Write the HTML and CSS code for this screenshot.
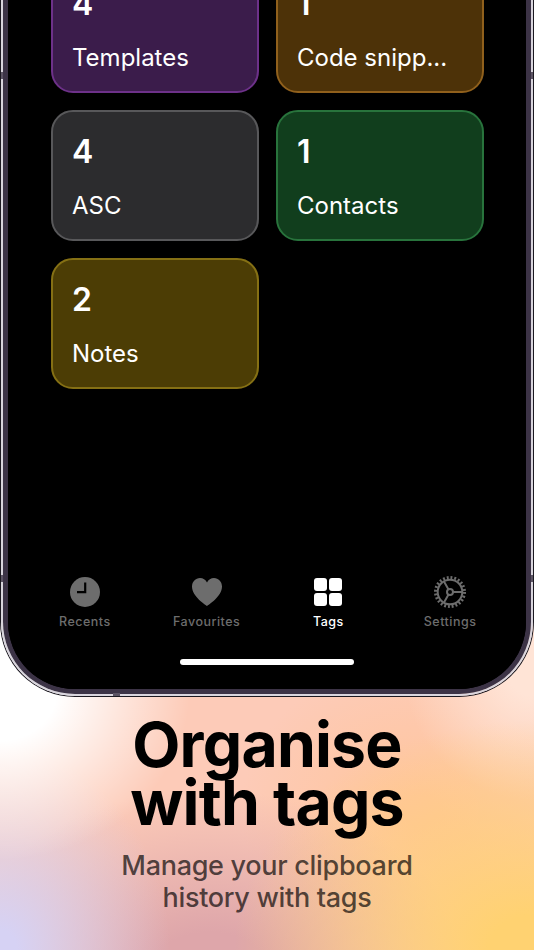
FILE: index.html
```html
<!DOCTYPE html>
<html lang="en">
<head>
<meta charset="utf-8">
<title>Organise with tags</title>
<link rel="stylesheet" href="styles.css">
</head>
<body>
<main class="page">
  <div class="phone">
    <div class="phone-band">
      <div class="phone-frame">
        <div class="screen">
          <div class="tag-grid">
            <div class="tag tag-purple"><span class="tag-count">4</span><span class="tag-name">Templates</span></div>
            <div class="tag tag-brown"><span class="tag-count">1</span><span class="tag-name">Code snipp...</span></div>
            <div class="tag tag-grey"><span class="tag-count">4</span><span class="tag-name">ASC</span></div>
            <div class="tag tag-green"><span class="tag-count">1</span><span class="tag-name">Contacts</span></div>
            <div class="tag tag-yellow"><span class="tag-count">2</span><span class="tag-name">Notes</span></div>
          </div>
          <nav class="tabs">
            <div class="tab">
              <svg class="tab-icon" viewBox="0 0 32 32" aria-hidden="true"><circle cx="16" cy="16" r="15" fill="currentColor"/><path d="M16.2 6.500V16.200H8" fill="none" stroke="#000" stroke-width="2.200"/></svg>
              <span>Recents</span>
            </div>
            <div class="tab">
              <svg class="tab-icon" viewBox="0 0 32 32" aria-hidden="true"><path d="M16 30C14.800 29 1 20.500 1 10.500C1 5.600 4.600 2 9 2C12 2 14.600 3.600 16 6.400C17.400 3.600 20 2 23 2C27.400 2 31 5.600 31 10.500C31 20.500 17.200 29 16 30Z" fill="currentColor"/></svg>
              <span>Favourites</span>
            </div>
            <div class="tab tab-active">
              <svg class="tab-icon" viewBox="0 0 32 32" aria-hidden="true"><rect x="2" y="2" width="13" height="13" rx="3" fill="currentColor"/><rect x="17" y="2" width="13" height="13" rx="3" fill="currentColor"/><rect x="2" y="17" width="13" height="13" rx="3" fill="currentColor"/><rect x="17" y="17" width="13" height="13" rx="3" fill="currentColor"/></svg>
              <span>Tags</span>
            </div>
            <div class="tab">
              <svg class="tab-icon" viewBox="0 0 32 32" aria-hidden="true" fill="none" stroke="currentColor"><circle cx="16" cy="16" r="14.500" stroke-width="3" stroke-dasharray="1.900 1.900"/><circle cx="16" cy="16" r="12.300" stroke-width="2"/><path d="M19 16H28M14.500 13.400L10 5.600M14.500 18.600L10 26.400" stroke-width="2"/><circle cx="16" cy="16" r="3" stroke-width="2"/></svg>
              <span>Settings</span>
            </div>
          </nav>
          <div class="home-bar"></div>
        </div>
      </div>
    </div>
    <i class="antenna antenna-left-top"></i>
    <i class="antenna antenna-left-low"></i>
    <i class="antenna antenna-right-top"></i>
    <i class="antenna antenna-right-low"></i>
    <i class="antenna antenna-bottom"></i>
  </div>
  <h1 class="title">Organise<br>with tags</h1>
  <p class="subtitle">Manage your clipboard<br>history with tags</p>
</main>
</body>
</html>
```
FILE: styles.css
```css
* { box-sizing: border-box; }
html, body { margin: 0; padding: 0; }
body { width: 534px; height: 950px; overflow: hidden; font-family: Inter, "Liberation Sans", sans-serif; }

.page {
  width: 534px;
  height: 950px;
  overflow: hidden;
  text-align: center;
  background:
    radial-gradient(ellipse 190px 170px at 0 690px, #fff 30%, rgba(255,255,255,0) 100%),
    radial-gradient(ellipse 170px 200px at 0 950px, #d6d2f4 10%, rgba(214,210,244,0) 100%),
    radial-gradient(ellipse 300px 230px at 534px 950px, #ffd271 15%, rgba(255,210,113,0) 100%),
    radial-gradient(circle 130px at 534px 670px, #ffe4d6 20%, rgba(255,228,214,0) 100%),
    radial-gradient(ellipse 260px 190px at 210px 980px, #dea6aa 25%, rgba(222,166,170,0) 100%),
    radial-gradient(ellipse 180px 150px at 420px 810px, #ffc59d 10%, rgba(255,197,157,0) 100%),
    #fdcbb8;
}

.phone {
  position: relative;
  height: 697px;
  border: 1px solid #1b1820;
  border-top: 0;
  border-radius: 0 0 75px 75px;
}
.phone-band {
  height: 100%;
  border: 2px solid #d9d5dd;
  border-top: 0;
  border-radius: 0 0 74px 74px;
}
.phone-frame {
  height: 100%;
  border: 5px solid #3c3346;
  border-top: 0;
  border-radius: 0 0 72px 72px;
  background: #000;
}
.screen {
  height: 100%;
  overflow: hidden;
  display: flex;
  flex-direction: column;
  border-radius: 0 0 67px 67px;
  background: #000;
}

.tag-grid {
  display: grid;
  grid-template-columns: 208px 208px;
  grid-auto-rows: 131px;
  gap: 17px;
  margin: -38px 0 0 43px;
  flex: 1;
  align-content: start;
}
.tag {
  display: flex;
  flex-direction: column;
  justify-content: space-between;
  padding: 22px 19px 17px;
  border: 2px solid;
  border-radius: 22px;
  color: #fff;
  text-align: left;
}
.tag-count { font-size: 32px; font-weight: 600; line-height: 36px; }
.tag-name { font-size: 24px; font-weight: 400; line-height: 32px; letter-spacing: 0; }
.tag-purple { background: #3b1c4b; border-color: #6d3189; }
.tag-brown { background: #4d3208; border-color: #90601c; }
.tag-grey { background: #2c2c2e; border-color: #58585a; }
.tag-green { background: #113e1d; border-color: #28733c; }
.tag-yellow { background: #4c3d05; border-color: #857014; }

.tabs {
  display: grid;
  grid-template-columns: repeat(4, 1fr);
  padding: 0 15px 0 16px;
  margin-bottom: 29px;
}
.tab {
  display: flex;
  flex-direction: column;
  align-items: center;
  gap: 6px;
  color: #6d6d6d;
  font-size: 12.500px;
  font-weight: 500;
  line-height: 16px;
  letter-spacing: 0.5px;
}
.tab-active { color: #fff; }
.tab-icon { width: 32px; height: 32px; display: block; }

.home-bar {
  width: 174px;
  height: 6px;
  margin: 0 auto 24px;
  border-radius: 3px;
  background: #fff;
}

.antenna { position: absolute; background: #5c5464; }
.antenna-left-top, .antenna-left-low { left: 0; width: 2px; height: 7px; }
.antenna-right-top, .antenna-right-low { right: 0; width: 2px; height: 7px; }
.antenna-left-top, .antenna-right-top { top: 72px; }
.antenna-left-low, .antenna-right-low { top: 575px; }
.antenna-bottom { left: 112px; bottom: 0; width: 7px; height: 3px; }

.title {
  margin: 18px 0 0;
  font-size: 62.500px;
  font-weight: 700;
  line-height: 58px;
  letter-spacing: -0.8px;
  color: #000;
}
.subtitle {
  margin: 19px 0 0;
  font-size: 27px;
  font-weight: 500;
  line-height: 32px;
  letter-spacing: -0.3px;
  color: rgba(0,0,0,0.68);
}
```
